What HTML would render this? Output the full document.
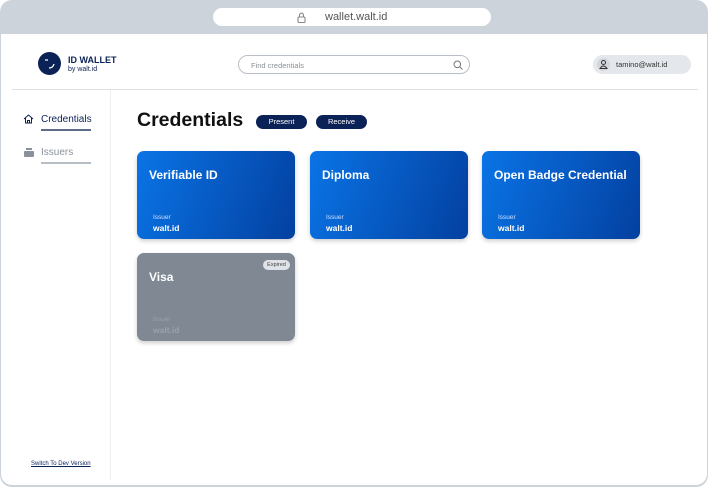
<!DOCTYPE html>
<html><head><style>
*{margin:0;padding:0;box-sizing:border-box}
body{width:708px;height:487px;background:#fff;font-family:"Liberation Sans",sans-serif;position:relative;overflow:hidden}
.frame{position:absolute;left:0;top:0;width:708px;height:487px;border-radius:12px;background:#cdd3da;overflow:hidden}
.page{position:absolute;left:1px;top:34px;width:706px;height:451px;background:#fff;border-radius:0 0 11px 11px}
.url{position:absolute;left:213px;top:8px;width:278px;height:18px;border-radius:9px;background:#fff;font-size:11px;color:#555;}
.abs{position:absolute}
.card{position:absolute;width:158px;height:88px;border-radius:7px;background:linear-gradient(110deg,#0a74e6,#0340a0);box-shadow:0 2px 4px rgba(0,0,0,.2);color:#fff}
.card .t{position:absolute;left:12px;top:17px;font-size:12px;font-weight:bold}
.card .i{position:absolute;left:16px;top:63px;font-size:6.5px;color:#cfe0ff}
.card .w{position:absolute;left:16px;top:72px;font-size:8.5px;font-weight:bold}
.btn{position:absolute;top:115px;height:14px;border-radius:7px;background:#0b2257;color:#fff;font-size:7.5px;text-align:center;line-height:14px}
</style></head><body>
<div class="frame">
 <div class="url"><svg class="abs" style="left:84px;top:4px" width="9" height="11" viewBox="0 0 9 11"><rect x="1" y="5" width="7" height="5.5" rx="1" fill="none" stroke="#888" stroke-width="1.1"/><path d="M2.5 5V3.2a2 2 0 0 1 4 0V5" fill="none" stroke="#888" stroke-width="1.1"/></svg><span class="abs" style="left:112px;top:3px">wallet.walt.id</span></div>
 <div class="page">
  <div class="abs" style="left:37px;top:18px;width:23px;height:23px;border-radius:50%;background:#0b2257"></div>
  <svg class="abs" style="left:37px;top:18px" width="23" height="23"><path d="M7 8h3" stroke="#fff" stroke-width="1.3"/><path d="M11 16q4 0 5-4" fill="none" stroke="#fff" stroke-width="1.3"/></svg>
  <div class="abs" style="left:67px;top:21px;font-size:9px;font-weight:bold;color:#0b2257">ID WALLET</div>
  <div class="abs" style="left:67px;top:32px;font-size:7px;color:#0b2257">by walt.id</div>
  <div class="abs" style="left:237px;top:21px;width:232px;height:19px;border:1px solid #b8bec6;border-radius:10px;font-size:7.5px;color:#8a9099;padding:5px 0 0 12px">Find credentials
   <svg class="abs" style="left:214px;top:4px" width="10" height="10"><circle cx="4.3" cy="4.3" r="3.3" fill="none" stroke="#777" stroke-width="1"/><path d="M6.8 6.8L9.5 9.5" stroke="#777"/></svg></div>
  <div class="abs" style="left:592px;top:21px;width:98px;height:19px;border-radius:10px;background:#e4e7eb;font-size:7.5px;color:#333;padding:5px 0 0 23px">tamino@walt.id
   <svg class="abs" style="left:4px;top:3px" width="13" height="13"><circle cx="6.5" cy="6.5" r="6.5" fill="#d3d7dd"/><circle cx="6.5" cy="4.5" r="2" fill="none" stroke="#333" stroke-width="1"/><path d="M3 10.5q3.5-5 7 0z" fill="none" stroke="#333" stroke-width="1"/></svg></div>
  <div class="abs" style="left:11px;top:55px;width:686px;height:1px;background:#dde0e4"></div>
  <div class="abs" style="left:109px;top:56px;width:1px;height:390px;background:#eceef0"></div>
  <svg class="abs" style="left:22px;top:80px" width="11" height="10"><path d="M1 5L5.5 1 10 5M2.5 4v5h6V4M4.5 9V6.5h2V9" fill="none" stroke="#0b2257" stroke-width="1"/></svg>
  <div class="abs" style="left:40px;top:80px;font-size:10px;color:#0b2257">Credentials</div>
  <div class="abs" style="left:40px;top:95px;width:50px;height:1.5px;background:#5e6c8a"></div>
  <svg class="abs" style="left:22px;top:113px" width="12" height="11"><rect x="3" y="1" width="6" height="2" fill="#8a919b"/><rect x="1" y="4" width="10" height="6" rx="1" fill="#8a919b"/></svg>
  <div class="abs" style="left:40px;top:113px;font-size:10px;color:#8a919b">Issuers</div>
  <div class="abs" style="left:40px;top:128px;width:50px;height:1.5px;background:#b8bec6"></div>
  <div class="abs" style="left:30px;top:427px;font-size:6px;color:#0b2257;text-decoration:underline">Switch To Dev Version</div>
  <div class="abs" style="left:136px;top:75px;font-size:19.5px;font-weight:bold;color:#111">Credentials</div>
  <div class="btn" style="left:255px;top:81px;width:51px">Present</div>
  <div class="btn" style="left:315px;top:81px;width:51px">Receive</div>
  <div class="card" style="left:136px;top:117px"><div class="t">Verifiable ID</div><div class="i">Issuer</div><div class="w">walt.id</div></div>
  <div class="card" style="left:309px;top:117px"><div class="t">Diploma</div><div class="i">Issuer</div><div class="w">walt.id</div></div>
  <div class="card" style="left:481px;top:117px"><div class="t">Open Badge Credential</div><div class="i">Issuer</div><div class="w">walt.id</div></div>
  <div class="card" style="left:136px;top:219px;background:#7f8893"><div class="t">Visa</div><div class="i" style="color:#9aa2ac">Issuer</div><div class="w" style="color:#9aa2ac">walt.id</div>
   <div class="abs" style="left:126px;top:7px;width:27px;height:10px;border-radius:5px;background:#dfe2e6;color:#444;font-size:5.5px;text-align:center;line-height:10px">Expired</div></div>
 </div>
</div>
</body></html>
